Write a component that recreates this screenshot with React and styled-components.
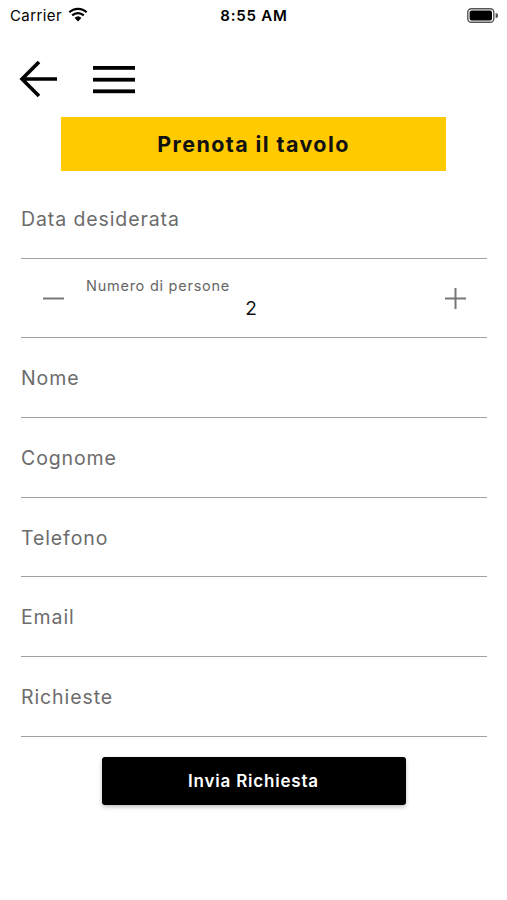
import styled, { createGlobalStyle } from 'styled-components'

const GlobalStyle = createGlobalStyle`
  body {
    margin: 0;
    background: #fff;
    font-family: Inter, "Liberation Sans", sans-serif;
  }
`

function WifiIcon() {
  return (
    <svg width="20" height="15" viewBox="0 0 20 15">
      <path d="M10 14.5 L6.6 10.9 A5 5 0 0 1 13.4 10.9 Z" fill="#000" />
      <path d="M4.2 8.4 A8.4 8.4 0 0 1 15.8 8.4" stroke="#000" strokeWidth="2.2" fill="none" />
      <path d="M1.3 5.3 A12.6 12.6 0 0 1 18.7 5.3" stroke="#000" strokeWidth="2.2" fill="none" />
    </svg>
  )
}

function BatteryIcon() {
  return (
    <svg width="31" height="15" viewBox="0 0 31 15">
      <rect x="0.8" y="0.8" width="26" height="13.4" rx="3.5" stroke="#555" strokeWidth="1.4" fill="none" />
      <rect x="2.6" y="2.6" width="22.4" height="9.8" rx="2" fill="#000" />
      <path d="M28.6 5 v5 a2.5 2.5 0 0 0 0 -5 z" fill="#555" />
    </svg>
  )
}

function BackIcon() {
  return (
    <svg width="40" height="38" viewBox="0 0 40 38">
      <path d="M3 18 H38 M20 1 L3 18 L20 35" stroke="#000" strokeWidth="3.6" fill="none" />
    </svg>
  )
}

function MenuIcon() {
  return (
    <svg width="42" height="28" viewBox="0 0 42 28">
      <rect x="0" y="0" width="42" height="3.8" fill="#000" />
      <rect x="0" y="11.8" width="42" height="3.8" fill="#000" />
      <rect x="0" y="23.4" width="42" height="3.8" fill="#000" />
    </svg>
  )
}

function StepIcon({ plus }) {
  return (
    <svg width="21" height="21" viewBox="0 0 21 21">
      <path d={plus ? 'M0 10.5 H21 M10.5 0 V21' : 'M0 10.5 H21'} stroke="#777" strokeWidth="2" />
    </svg>
  )
}

const fields = ['Nome', 'Cognome', 'Telefono', 'Email', 'Richieste']

export default function App() {
  return (
    <Screen>
      <GlobalStyle />
      <StatusBar>
        <Carrier>
          Carrier
          <WifiIcon />
        </Carrier>
        <Time>8:55 AM</Time>
        <Battery>
          <BatteryIcon />
        </Battery>
      </StatusBar>

      <NavBar>
        <IconButton>
          <BackIcon />
        </IconButton>
        <IconButton>
          <MenuIcon />
        </IconButton>
      </NavBar>

      <Banner>Prenota il tavolo</Banner>

      <Form>
        <Field>
          <Placeholder>Data desiderata</Placeholder>
        </Field>
        <Counter>
          <StepButton>
            <StepIcon />
          </StepButton>
          <CounterBody>
            <CounterLabel>Numero di persone</CounterLabel>
            <CounterValue>2</CounterValue>
          </CounterBody>
          <StepButton>
            <StepIcon plus />
          </StepButton>
        </Counter>
        {fields.map((f) => (
          <Field key={f}>
            <Placeholder>{f}</Placeholder>
          </Field>
        ))}
      </Form>

      <SubmitRow>
        <Submit>Invia Richiesta</Submit>
      </SubmitRow>
    </Screen>
  )
}

const Screen = styled.div`
  width: 507px;
  height: 900px;
  background: #fff;
  overflow: hidden;
`

const StatusBar = styled.div`
  height: 30px;
  display: grid;
  grid-template-columns: 1fr auto 1fr;
  align-items: center;
  padding: 0 9px 0 10px;
  font-size: 15px;
  color: #000;
`

const Carrier = styled.div`
  display: flex;
  align-items: center;
  gap: 6px;
  font-weight: 400;
  letter-spacing: 0.4px;
  svg {
    margin-top: -1px;
  }
`

const Time = styled.div`
  font-weight: 600;
  letter-spacing: 0.8px;
`

const Battery = styled.div`
  display: flex;
  justify-content: flex-end;
`

const NavBar = styled.div`
  display: flex;
  align-items: center;
  gap: 34px;
  padding: 30px 0 0 19px;
  height: 40px;
`

const IconButton = styled.div`
  display: flex;
  align-items: center;
`

const Banner = styled.div`
  margin: 17px 0 0 61px;
  width: 385px;
  height: 54px;
  background: #ffca00;
  display: flex;
  align-items: center;
  justify-content: center;
  font-size: 21.5px;
  font-weight: 700;
  color: #111;
  letter-spacing: 1.4px;
`

const Form = styled.div`
  margin: 8px 20px 0 21px;
  display: flex;
  flex-direction: column;
`

const Field = styled.div`
  box-sizing: border-box;
  height: 79.7px;
  border-bottom: 1.5px solid #a2a2a2;
  display: flex;
  align-items: center;
`

const Placeholder = styled.span`
  font-size: 19.5px;
  color: #6c6c6c;
  letter-spacing: 0.9px;
  margin-top: 1px;
`

const Counter = styled(Field)`
  align-items: stretch;
`

const StepButton = styled.div`
  width: 64px;
  display: flex;
  align-items: center;
  justify-content: center;
`

const CounterBody = styled.div`
  flex: 1;
  display: flex;
  flex-direction: column;
  padding-top: 18px;
`

const CounterLabel = styled.span`
  font-size: 14.5px;
  color: #666;
  margin-left: 1px;
  letter-spacing: 0.75px;
`

const CounterValue = styled.span`
  font-size: 19px;
  color: #111;
  text-align: center;
  margin-top: 3px;
  margin-right: 6px;
`

const SubmitRow = styled.div`
  display: flex;
  justify-content: center;
  padding: 20px 0 0 0;
`

const Submit = styled.div`
  width: 304px;
  height: 48px;
  background: #000;
  border-radius: 3px;
  box-shadow: 0 2px 4px rgba(0, 0, 0, 0.25);
  color: #fff;
  font-size: 17px;
  font-weight: 600;
  letter-spacing: 0.8px;
  display: flex;
  align-items: center;
  justify-content: center;
`
